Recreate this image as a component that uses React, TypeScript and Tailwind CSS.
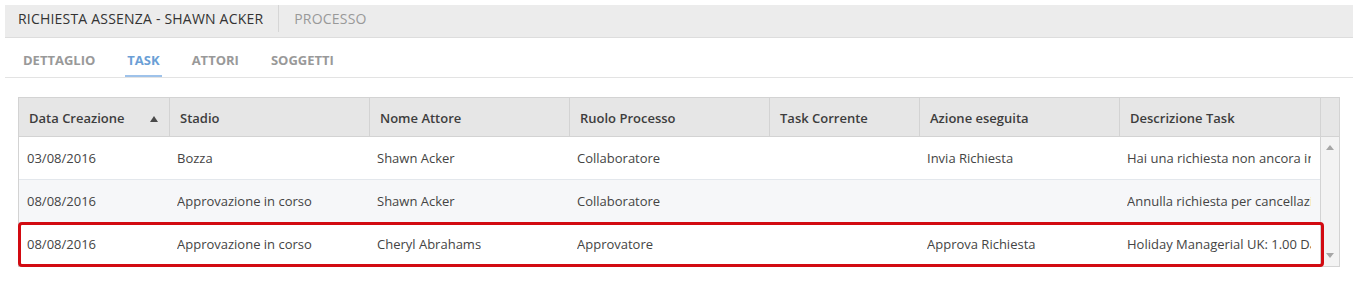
import React from 'react';

const columns = [
  { label: 'Data Creazione', width: 'w-[151px]', sort: true },
  { label: 'Stadio', width: 'w-[200px]' },
  { label: 'Nome Attore', width: 'w-[200px]' },
  { label: 'Ruolo Processo', width: 'w-[200px]' },
  { label: 'Task Corrente', width: 'w-[150px]' },
  { label: 'Azione eseguita', width: 'w-[200px]' },
  { label: 'Descrizione Task', width: 'w-[200px]' },
];

const rows = [
  ['03/08/2016', 'Bozza', 'Shawn Acker', 'Collaboratore', '', 'Invia Richiesta', 'Hai una richiesta non ancora inviata'],
  ['08/08/2016', 'Approvazione in corso', 'Shawn Acker', 'Collaboratore', '', '', 'Annulla richiesta per cancellazione'],
  ['08/08/2016', 'Approvazione in corso', 'Cheryl Abrahams', 'Approvatore', '', 'Approva Richiesta', 'Holiday Managerial UK: 1.00 Days'],
];

const tabs = ['DETTAGLIO', 'TASK', 'ATTORI', 'SOGGETTI'];

const App = () => {
  return (
    <div className="w-[1353px] h-[285px] bg-white font-['Open_Sans',sans-serif] overflow-hidden">
      {/* header bar */}
      <div className="ml-[5px] mt-[5px] h-[33px] bg-[#ececec] border-b border-[#dddddd] flex items-start text-[14px] tracking-[0.2px]">
        <div className="h-[27px] pl-[13px] pr-[15px] flex items-center border-r border-[#d6d6d6] text-[#333333]">
          RICHIESTA ASSENZA - SHAWN ACKER
        </div>
        <div className="h-[27px] pl-[15px] flex items-center text-[#999999]">PROCESSO</div>
      </div>

      {/* tabs */}
      <div className="ml-[5px] h-[40px] border-b border-[#e3e3e3] flex pl-[2px]">
        {tabs.map((t) => (
          <div key={t} className="px-[14px] h-full">
            <div
              className={`h-full px-[2px] pt-[14px] text-[13px] leading-4 font-bold border-b-2 ${
                t === 'TASK' ? 'text-[#6b9fd6] border-[#9ec2ea]' : 'text-[#999999] border-transparent'
              }`}
            >
              {t}
            </div>
          </div>
        ))}
      </div>

      {/* grid */}
      <div className="relative ml-[18px] mt-[19px] w-[1322px] border border-[#d3d3d3] flex text-[13px]">
        <div className="w-[1301px]">
          <div className="flex h-[39px] bg-[#e6e6e6] border-b border-[#d3d3d3]">
            {columns.map((c, i) => (
              <div
                key={c.label}
                className={`${c.width} h-full flex items-center pt-[4px] pl-[10px] pr-[10px] font-semibold text-[#3d3d3d] ${
                  i < columns.length - 1 ? 'border-r border-[#d3d3d3]' : ''
                }`}
              >
                <span className="flex-1">{c.label}</span>
                {c.sort && (
                  <svg width="8" height="6" viewBox="0 0 8 6" className="mr-[1px]">
                    <path d="M4 0 L8 6 L0 6 Z" fill="#4a4a4a" />
                  </svg>
                )}
              </div>
            ))}
          </div>
          {rows.map((r, ri) => (
            <div
              key={ri}
              className={`flex h-[43px] ${ri < rows.length - 1 ? 'border-b border-[#e3e7ec]' : ''} ${
                ri === 1 ? 'bg-[#f6f7f9]' : 'bg-white'
              }`}
            >
              {r.map((cell, ci) => (
                <div
                  key={ci}
                  className={`${columns[ci].width} h-full flex items-center pt-[1px] ${
                    ci === 0 ? 'pl-[8px] pr-[8px]' : 'pl-[7px] pr-[9px]'
                  } text-[#444444]`}
                >
                  <div className="overflow-hidden whitespace-nowrap">{cell}</div>
                </div>
              ))}
            </div>
          ))}
        </div>

        {/* scrollbar */}
        <div className="w-[19px] border-l border-[#d3d3d3] flex flex-col">
          <div className="h-[39px] bg-[#e6e6e6] border-b border-[#d3d3d3]" />
          <div className="flex-1 bg-[#f3f3f3] flex flex-col justify-between items-center py-[8px]">
            <svg width="8" height="5" viewBox="0 0 8 5">
              <path d="M4 0 L8 5 L0 5 Z" fill="#a6a6a6" />
            </svg>
            <svg width="8" height="5" viewBox="0 0 8 5">
              <path d="M0 0 L8 0 L4 5 Z" fill="#a6a6a6" />
            </svg>
          </div>
        </div>

        {/* highlight on last row */}
        <div className="absolute left-[-1px] top-[124px] w-[1306px] h-[45px] border-[3px] border-[#d20a11] rounded-[4px] pointer-events-none" />
      </div>
    </div>
  );
};

export default App;
